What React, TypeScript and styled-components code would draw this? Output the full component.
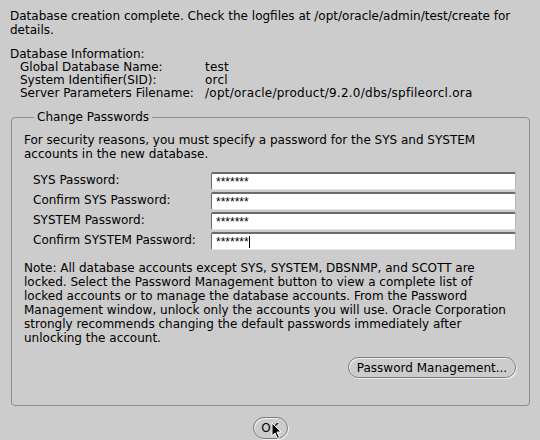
import React from "react";
import styled, { createGlobalStyle } from "styled-components";

const Global = createGlobalStyle`
  html, body { margin: 0; padding: 0; background: #cccccc; }
  body { width: 540px; height: 440px; overflow: hidden; }
`;

const Page = styled.div`
  width: 540px;
  height: 440px;
  box-sizing: border-box;
  padding: 9px 10px 0 10px;
  font-family: "DejaVu Sans", sans-serif;
  font-size: 12px;
  line-height: 14px;
  color: #000;
  background: #cccccc;
  display: flex;
  flex-direction: column;
`;

const Para = styled.p<{ $mt?: number }>`
  margin: ${(p) => p.$mt ?? 0}px 0 0 0;
  white-space: nowrap;
`;

const InfoGrid = styled.div`
  display: grid;
  grid-template-columns: 185px auto;
  line-height: 13px;
  padding-left: 10px;
`;

const InfoValue = styled.span`
  letter-spacing: 0.25px;
`;

const Group = styled.fieldset`
  margin: 10px 0 0 1px;
  width: 519px;
  box-sizing: border-box;
  border: 1px solid #8c8c8c;
  border-radius: 4px;
  padding: 9px 13px 27px 12px;
`;

const Legend = styled.legend`
  margin-left: 10px;
  padding: 0 3px;
  line-height: 14px;
`;

const Rows = styled.div`
  display: flex;
  flex-direction: column;
  gap: 2px;
  margin-top: 11px;
  padding-left: 9px;
`;

const Row = styled.div`
  display: grid;
  grid-template-columns: 178px 305px;
  align-items: center;
  height: 18px;
`;

const Label = styled.span`
  margin-top: -2px;
`;

const Field = styled.div`
  position: relative;
  height: 18px;
  box-sizing: border-box;
  background: #fff;
  border-top: 2px solid #6a6a6a;
  border-left: 1px solid #6a6a6a;
  border-right: 1px solid #b8b8b8;
  border-bottom: 1px solid #e6e6e6;
  border-radius: 2px;
  padding-left: 4px;
  display: flex;
  align-items: center;
  font-family: "Liberation Sans", sans-serif;
  font-size: 12px;
  line-height: 15px;
`;

const Stars = styled.span`
  padding-top: 2px;
`;

const Caret = styled.span`
  display: inline-block;
  width: 1px;
  height: 12px;
  background: #000;
`;

const ButtonRow = styled.div<{ $center?: boolean; $mt: number }>`
  display: flex;
  justify-content: ${(p) => (p.$center ? "center" : "flex-end")};
  margin-top: ${(p) => p.$mt}px;
`;

const Pill = styled.button<{ $w: number; $h: number }>`
  position: relative;
  width: ${(p) => p.$w}px;
  height: ${(p) => p.$h}px;
  box-sizing: border-box;
  padding: 0;
  font-family: "DejaVu Sans", sans-serif;
  font-size: 12px;
  color: #000;
  background: #cccccc;
  border: 1px solid #7c7c7c;
  border-radius: 11px;
  box-shadow: inset 1px 1px 0 #f2f2f2, 1px 1px 0 #eeeeee;
`;

const Pointer = styled.svg`
  position: absolute;
  left: 17px;
  top: 4px;
`;

const rows = [
  { label: "SYS Password:" },
  { label: "Confirm SYS Password:" },
  { label: "SYSTEM Password:" },
  { label: "Confirm SYSTEM Password:", caret: true },
];

export default function App() {
  return (
    <>
      <Global />
      <Page>
        <Para>
          Database creation complete. Check the logfiles at /opt/oracle/admin/test/create for
          <br />
          details.
        </Para>
        <Para $mt={10}>Database Information:</Para>
        <InfoGrid>
          <span>Global Database Name:</span>
          <InfoValue>test</InfoValue>
          <span>System Identifier(SID):</span>
          <InfoValue>orcl</InfoValue>
          <span>Server Parameters Filename:</span>
          <InfoValue>/opt/oracle/product/9.2.0/dbs/spfileorcl.ora</InfoValue>
        </InfoGrid>
        <Group>
          <Legend>Change Passwords</Legend>
          <Para>
            For security reasons, you must specify a password for the SYS and SYSTEM
            <br />
            accounts in the new database.
          </Para>
          <Rows>
            {rows.map((r) => (
              <Row key={r.label}>
                <Label>{r.label}</Label>
                <Field>
                  <Stars>*******</Stars>
                  {r.caret && <Caret />}
                </Field>
              </Row>
            ))}
          </Rows>
          <Para $mt={11}>
            Note: All database accounts except SYS, SYSTEM, DBSNMP, and SCOTT are
            <br />
            locked. Select the Password Management button to view a complete list of
            <br />
            locked accounts or to manage the database accounts. From the Password
            <br />
            Management window, unlock only the accounts you will use. Oracle Corporation
            <br />
            strongly recommends changing the default passwords immediately after
            <br />
            unlocking the account.
          </Para>
          <ButtonRow $mt={12}>
            <Pill $w={168} $h={21}>Password Management...</Pill>
          </ButtonRow>
        </Group>
        <ButtonRow $center $mt={11}>
          <Pill $w={35} $h={22}>
            OK
            <Pointer width="12" height="18" viewBox="0 0 12 18">
              <path
                d="M1 1 L1 14 L4 11 L6.5 16.5 L8.5 15.5 L6 10 L10 10 Z"
                fill="#000"
                stroke="#fff"
                strokeWidth="1"
              />
            </Pointer>
          </Pill>
        </ButtonRow>
      </Page>
    </>
  );
}
